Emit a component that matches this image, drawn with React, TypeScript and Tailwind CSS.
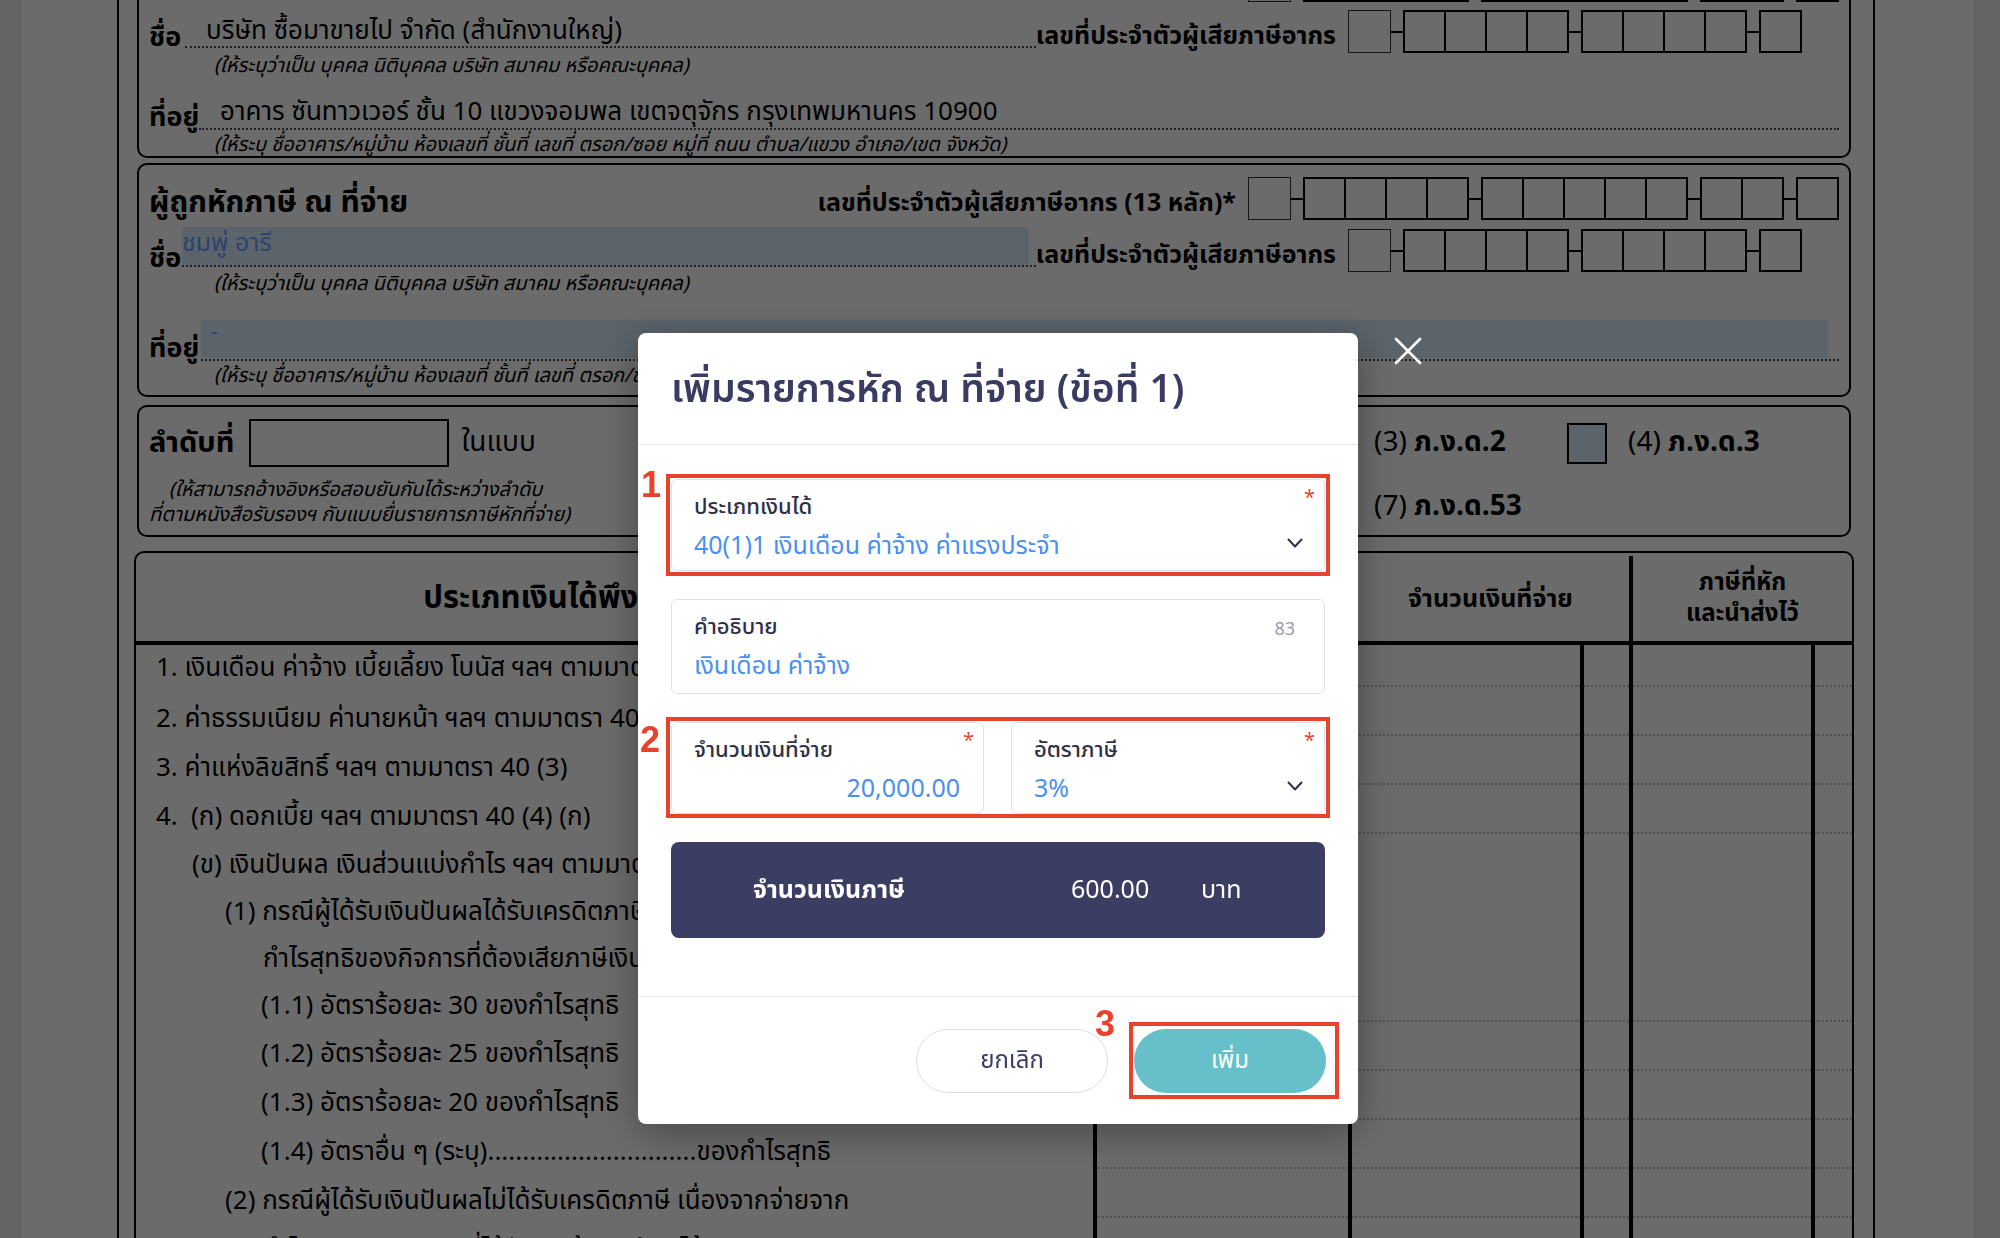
import React from 'react'

const TH =
	"font-['Noto_Sans_Thai','Noto_Sans_Thai_UI','Noto_Sans','Liberation_Sans',sans-serif]"

function DigitBoxes({
	groups,
	className = '',
}: {
	groups: number[]
	className?: string
}) {
	return (
		<div className={`flex items-center shrink-0 ${className}`}>
			{groups.map((n, gi) => (
				<div key={gi} className="flex items-center">
					{gi > 0 && <div className="w-[12px] h-[2px] bg-black" />}
					{gi === 0 ? (
						<div className="w-[43px] h-[43px] border border-black/80" />
					) : (
						<div className="flex border-2 border-black">
							{Array.from({ length: n }).map((_, i) => (
								<div
									key={i}
									className={`h-[39px] shrink-0 ${i > 0 ? 'w-[41px] border-l-2 border-black' : 'w-[39px]'}`}
								/>
							))}
						</div>
					)}
				</div>
			))}
		</div>
	)
}

function Hint({ children, className = '' }: { children: React.ReactNode; className?: string }) {
	return <div className={`text-[20px] italic leading-[24px] text-black whitespace-nowrap ${className}`}>{children}</div>
}

function TopBox() {
	return (
		<div className="mx-[3px] -mt-[58px] h-[216px] shrink-0 rounded-[10px] border-2 border-black px-[10px] pt-[15px] flex flex-col">
			<div className="h-[44px] flex items-end justify-between">
				<span className="text-[30px] font-bold leading-[30px] -translate-y-[8px]">
					ผู้มีหน้าที่หักภาษี ณ ที่จ่าย
				</span>
				<div className="flex items-end">
					<span className="text-[24px] font-bold leading-[30px] mr-[13px] -translate-y-[8px]">
						เลขประจำตัวผู้เสียภาษีอากร (13 หลัก)*
					</span>
					<DigitBoxes groups={[1, 4, 5, 2, 1]} />
				</div>
			</div>
			<div className="mt-[8px] h-[44px] flex items-end">
				<span className="w-[36px] shrink-0 whitespace-nowrap text-[27px] font-bold leading-[30px]">ชื่อ</span>
				<div className="flex-1 h-[38px] border-b-2 border-dotted border-black/70 flex items-end pl-[21px] mb-[5px]">
					<span className="text-[26px] leading-[30px] whitespace-nowrap">บริษัท ซื้อมาขายไป จำกัด (สำนักงานใหญ่)</span>
				</div>
				<span className="text-[25px] font-bold leading-[30px] mb-[2px] whitespace-nowrap">เลขที่ประจำตัวผู้เสียภาษีอากร</span>
				<DigitBoxes className="ml-[12px] mr-[37px]" groups={[1, 4, 4, 1]} />
			</div>
			<Hint className="pl-[65px] mt-[1px]">(ให้ระบุว่าเป็น บุคคล นิติบุคคล บริษัท สมาคม หรือคณะบุคคล)</Hint>
			<div className="mt-[20px] h-[32px] flex items-end">
				<span className="w-[50px] shrink-0 whitespace-nowrap text-[27px] font-bold leading-[30px] translate-y-[3px]">ที่อยู่</span>
				<div className="flex-1 h-[32px] border-b-2 border-dotted border-black/70 flex items-end pl-[21px]">
					<span className="text-[26px] leading-[32px] whitespace-nowrap">
						อาคาร ซันทาวเวอร์ ชั้น 10 แขวงจอมพล เขตจตุจักร กรุงเทพมหานคร 10900
					</span>
				</div>
			</div>
			<Hint className="pl-[65px] mt-[3px]">
				(ให้ระบุ ชื่ออาคาร/หมู่บ้าน ห้องเลขที่ ชั้นที่ เลขที่ ตรอก/ซอย หมู่ที่ ถนน ตำบล/แขวง อำเภอ/เขต จังหวัด)
			</Hint>
		</div>
	)
}

function PayeeBox() {
	return (
		<div className="mx-[3px] mt-[5px] h-[234px] shrink-0 rounded-[10px] border-2 border-black px-[10px] pt-[12px] flex flex-col">
			<div className="h-[43px] flex items-center justify-between">
				<span className="text-[30px] font-bold leading-[36px] translate-y-[4px] whitespace-nowrap">ผู้ถูกหักภาษี ณ ที่จ่าย</span>
				<div className="flex items-center">
					<span className="text-[25px] font-bold leading-[30px] mr-[12px] translate-y-[4px] whitespace-nowrap">
						เลขที่ประจำตัวผู้เสียภาษีอากร (13 หลัก)*
					</span>
					<DigitBoxes groups={[1, 4, 5, 2, 1]} />
				</div>
			</div>
			<div className="mt-[6px] h-[46px] flex items-end">
				<span className="w-[33px] shrink-0 whitespace-nowrap text-[27px] font-bold leading-[30px] translate-y-[2px]">ชื่อ</span>
				<div className="flex-1 h-[40px] border-b-2 border-dotted border-black/70 mb-[5px] pr-[4px]">
					<div className="h-[38px] w-[847px] bg-[#d9eeff] text-[25px] leading-[32px] text-[#6f9eff]">
						ชมพู่ อารี
					</div>
				</div>
				<span className="text-[25px] font-bold leading-[30px] mb-[2px] whitespace-nowrap">เลขที่ประจำตัวผู้เสียภาษีอากร</span>
				<DigitBoxes className="ml-[12px] mr-[37px]" groups={[1, 4, 4, 1]} />
			</div>
			<Hint className="pl-[65px]">(ให้ระบุว่าเป็น บุคคล นิติบุคคล บริษัท สมาคม หรือคณะบุคคล)</Hint>
			<div className="mt-[24px] h-[41px] flex items-end">
				<span className="w-[52px] shrink-0 whitespace-nowrap text-[27px] font-bold leading-[30px] translate-y-[3px]">ที่อยู่</span>
				<div className="flex-1 h-[41px] border-b-2 border-dotted border-black/70 pr-[11px]">
					<div className="h-[38px] bg-[#d9eeff] pl-[10px] text-[22px] leading-[26px] text-[#6f9eff]">-</div>
				</div>
			</div>
			<Hint className="pl-[65px] mt-[3px]">
				(ให้ระบุ ชื่ออาคาร/หมู่บ้าน ห้องเลขที่ ชั้นที่ เลขที่ ตรอก/ซอย หมู่ที่ ถนน ตำบล/แขวง อำเภอ/เขต จังหวัด)
			</Hint>
		</div>
	)
}

function Check({ filled = false }: { filled?: boolean }) {
	return <div className={`w-[40px] h-[41px] border-2 border-black ${filled ? 'bg-[#d9eeff]' : ''}`} />
}

function FormTypeBox() {
	return (
		<div className="mx-[3px] mt-[8px] h-[132px] shrink-0 rounded-[10px] border-2 border-black px-[10px] pt-[12px] flex">
			<div className="flex flex-col">
				<div className="flex items-center h-[48px]">
					<span className="text-[29px] font-bold leading-[34px] whitespace-nowrap">ลำดับที่</span>
					<div className="ml-[15px] w-[200px] h-[48px] border-2 border-black" />
					<span className="ml-[12px] text-[28px] leading-[30px]">ในแบบ</span>
				</div>
				<Hint className="pl-[20px] mt-[11px] leading-[25px]">(ให้สามารถอ้างอิงหรือสอบยันกันได้ระหว่างลำดับ</Hint>
				<Hint className="leading-[25px]">ที่ตามหนังสือรับรองฯ กับแบบยื่นรายการภาษีหักที่จ่าย)</Hint>
			</div>
			<div className="ml-auto w-[465px] flex flex-col">
				<div className="flex items-center h-[48px]">
					<span className="w-[193px] text-[28px] leading-[30px]">
						(3) <b>ภ.ง.ด.2</b>
					</span>
					<Check filled />
					<span className="ml-[21px] text-[28px] leading-[30px]">
						(4) <b>ภ.ง.ด.3</b>
					</span>
				</div>
				<div className="mt-[24px] h-[32px] flex items-center">
					<span className="text-[28px] leading-[30px]">
						(7) <b>ภ.ง.ด.53</b>
					</span>
				</div>
			</div>
		</div>
	)
}

const incomeLines: { text: string; lead?: string; pl: string; h: string }[] = [
	{ text: '1. เงินเดือน ค่าจ้าง เบี้ยเลี้ยง โบนัส ฯลฯ ตามมาตรา 40 (1)', pl: 'pl-[20px] pt-[4px]', h: 'h-[42px]' },
	{ text: '2. ค่าธรรมเนียม ค่านายหน้า ฯลฯ ตามมาตรา 40 (2)', pl: 'pl-[20px] pt-[14px]', h: 'h-[49px]' },
	{ text: '3. ค่าแห่งลิขสิทธิ์ ฯลฯ ตามมาตรา 40 (3)', pl: 'pl-[20px] pt-[14px]', h: 'h-[49px]' },
	{ lead: '4.', text: '(ก) ดอกเบี้ย ฯลฯ ตามมาตรา 40 (4) (ก)', pl: 'pl-[20px] pt-[14px]', h: 'h-[49px]' },
	{ text: '(ข) เงินปันผล เงินส่วนแบ่งกำไร ฯลฯ ตามมาตรา 40 (4) (ข)', pl: 'pl-[56px] pt-[14px]', h: 'h-[47px]' },
	{ text: '(1) กรณีผู้ได้รับเงินปันผลได้รับเครดิตภาษี โดยจ่ายจาก', pl: 'pl-[89px] pt-[14px]', h: 'h-[47px]' },
	{ text: 'กำไรสุทธิของกิจการที่ต้องเสียภาษีเงินได้นิติบุคคลในอัตราดังนี้', pl: 'pl-[127px] pt-[14px]', h: 'h-[47px]' },
	{ text: '(1.1) อัตราร้อยละ 30 ของกำไรสุทธิ', pl: 'pl-[125px] pt-[14px]', h: 'h-[47px]' },
	{ text: '(1.2) อัตราร้อยละ 25 ของกำไรสุทธิ', pl: 'pl-[125px] pt-[14px]', h: 'h-[49px]' },
	{ text: '(1.3) อัตราร้อยละ 20 ของกำไรสุทธิ', pl: 'pl-[125px] pt-[14px]', h: 'h-[49px]' },
	{
		text: '(1.4) อัตราอื่น ๆ (ระบุ)..............................ของกำไรสุทธิ',
		pl: 'pl-[125px] pt-[14px]',
		h: 'h-[49px]',
	},
	{ text: '(2) กรณีผู้ได้รับเงินปันผลไม่ได้รับเครดิตภาษี เนื่องจากจ่ายจาก', pl: 'pl-[89px] pt-[14px]', h: 'h-[49px]' },
	{ text: 'กำไรสุทธิของกิจการที่ได้รับยกเว้นภาษีเงินได้นิติบุคคล', pl: 'pl-[127px] pt-[14px]', h: 'h-[49px]' },
]

const cellHeights = [
	'h-[42px]',
	'h-[49px]',
	'h-[49px]',
	'h-[49px]',
	'h-[188px]',
	'h-[49px]',
	'h-[49px]',
	'h-[49px]',
	'h-[49px]',
	'h-[49px]',
	'h-[49px]',
]

function CellColumn({ className = '' }: { className?: string }) {
	return (
		<div className={`flex flex-col ${className}`}>
			{cellHeights.map((h, i) => (
				<div key={i} className={`${h} shrink-0 border-b-2 border-dotted border-black/25`} />
			))}
		</div>
	)
}

function IncomeTable() {
	return (
		<div className="mt-[14px] flex-1 rounded-t-[10px] border-2 border-b-0 border-black flex flex-col">
			<div className="h-[92px] shrink-0 flex border-b-4 border-black">
				<div className="w-[957px] flex items-center justify-center pt-[4px] text-[31px] font-bold leading-[34px]">
					ประเภทเงินได้พึงประเมินที่จ่าย
				</div>
				<div className="w-[255px] border-l-4 border-black flex flex-col items-center justify-center text-[24px] font-bold leading-[28px]">
					<span>วัน เดือน</span>
					<span>หรือปีภาษี ที่จ่าย</span>
				</div>
				<div className="w-[281px] border-l-4 border-black flex items-center justify-center pt-[4px] text-[25px] font-bold leading-[28px]">
					จำนวนเงินที่จ่าย
				</div>
				<div className="flex-1 mt-[3px] border-l-4 border-black flex flex-col items-center justify-center text-[24px] font-bold leading-[31px]">
					<span>ภาษีที่หัก</span>
					<span>และนำส่งไว้</span>
				</div>
			</div>
			<div className="flex flex-1">
				<div className="w-[957px] flex flex-col">
					{incomeLines.map((l, i) => (
						<div key={i} className={`${l.h} ${l.pl} shrink-0 flex items-center whitespace-nowrap text-[26px] leading-[30px]`}>
							{l.lead && <span className="w-[35px]">{l.lead}</span>}
							<span>{l.text}</span>
						</div>
					))}
				</div>
				<CellColumn className="w-[255px] border-l-4 border-black" />
				<CellColumn className="w-[232px] border-l-4 border-black" />
				<CellColumn className="w-[49px] border-l-4 border-black" />
				<CellColumn className="w-[182px] border-l-4 border-black" />
				<CellColumn className="flex-1 border-l-4 border-black" />
			</div>
		</div>
	)
}

function Chevron() {
	return (
		<svg width="16" height="10" viewBox="0 0 16 10" fill="none">
			<polyline points="1.5,1.5 8,8.5 14.5,1.5" stroke="#2e3048" strokeWidth="2" strokeLinecap="round" strokeLinejoin="round" />
		</svg>
	)
}

function Field({
	label,
	value,
	required = false,
	counter,
	select = false,
	alignRight = false,
	className = '',
}: {
	label: string
	value: string
	required?: boolean
	counter?: string
	select?: boolean
	alignRight?: boolean
	className?: string
}) {
	return (
		<div className={`relative rounded-[6px] border border-[#dfe1ea] bg-white pl-[22px] pr-[23px] pt-[13px] ${className}`}>
			<div className="text-[22px] leading-[30px] font-medium text-[#2e3048]">{label}</div>
			{required && (
				<span className="absolute right-[9px] top-[8px] text-[20px] leading-none text-[#e8472f]">*</span>
			)}
			{counter && (
				<span className="absolute right-[29px] top-[17px] text-[18px] leading-[26px] text-[#9a9cab]">{counter}</span>
			)}
			<div className={`mt-[7px] text-[25px] leading-[32px] text-[#4a90f0] ${alignRight ? 'text-right' : ''}`}>
				{value}
			</div>
			{select && (
				<span className="absolute right-[21px] top-[58px]">
					<Chevron />
				</span>
			)}
		</div>
	)
}

function Mark({ n, className }: { n: string; className: string }) {
	return (
		<span
			className={`absolute font-['Liberation_Sans',sans-serif] text-[36px] font-bold leading-none text-[#e8412c] ${className}`}
		>
			{n}
		</span>
	)
}

function AddWithholdingModal() {
	return (
		<>
			<svg className="fixed left-[1394px] top-[337px]" width="28" height="28" viewBox="0 0 28 28">
				<path d="M2 2 L26 26 M26 2 L2 26" stroke="white" strokeWidth="2.6" strokeLinecap="round" />
			</svg>
			<div className="fixed left-[638px] top-[333px] w-[720px] rounded-[8px] bg-white shadow-[0_8px_40px_rgba(0,0,0,0.35)]">
				<div className="h-[112px] px-[33px] flex items-center border-b border-[#e3e3ec]">
					<h2 className="text-[39px] font-semibold leading-[44px] text-[#393b63] translate-y-[2px]">
						เพิ่มรายการหัก ณ ที่จ่าย (ข้อที่ 1)
					</h2>
				</div>
				<div className="px-[33px] pt-[34px] pb-[58px] flex flex-col gap-[28px]">
					<div className="relative">
						<Field
							className="h-[92px]"
							label="ประเภทเงินได้"
							value="40(1)1 เงินเดือน ค่าจ้าง ค่าแรงประจำ"
							required
							select
						/>
						<div className="absolute -inset-[5px] border-4 border-[#e8412c]" />
						<Mark n="1" className="-left-[30px] -top-[12px]" />
					</div>
					<Field className="h-[95px]" label="คำอธิบาย" value="เงินเดือน ค่าจ้าง" counter="83" />
					<div className="relative flex gap-[27px]">
						<Field className="h-[92px] w-[313px]" label="จำนวนเงินที่จ่าย" value="20,000.00" required alignRight />
						<Field className="h-[92px] flex-1" label="อัตราภาษี" value="3%" required select />
						<div className="absolute -inset-x-[5px] -top-[5px] -bottom-[4px] border-4 border-[#e8412c]" />
						<Mark n="2" className="-left-[31px] top-[0px]" />
					</div>
					<div className="h-[96px] rounded-[8px] bg-[#3c3d63] flex items-center pl-[82px] text-[25px] leading-[30px] text-white">
						<span className="w-[318px] font-bold">จำนวนเงินภาษี</span>
						<span className="w-[130px]">600.00</span>
						<span>บาท</span>
					</div>
				</div>
				<div className="h-[128px] border-t border-[#e3e3ec] flex items-center justify-end gap-[26px] pr-[32px]">
					<button className="h-[64px] w-[192px] rounded-full border border-[#dcdce6] bg-white text-[24px] text-[#3b3d64]">
						ยกเลิก
					</button>
					<div className="relative">
						<button className="h-[64px] w-[192px] rounded-full bg-[#67c0c9] text-[24px] text-white">เพิ่ม</button>
						<div className="absolute -left-[5px] -right-[13px] -top-[7px] -bottom-[6px] border-4 border-[#e8412c]" />
						<Mark n="3" className="-left-[39px] -top-[23px]" />
					</div>
				</div>
			</div>
		</>
	)
}

export default function App() {
	return (
		<div className={`relative h-screen w-screen overflow-hidden bg-[#eeeeee] text-black ${TH}`}>
			<div className="ml-[22px] w-[1952px] h-full bg-white">
				<div className="ml-[95px] w-[1758px] h-full border-x-2 border-black pl-[15px] pr-[19px] flex flex-col">
					<TopBox />
					<PayeeBox />
					<FormTypeBox />
					<IncomeTable />
				</div>
			</div>
			<div className="fixed inset-0 bg-black/[0.58]" />
			<AddWithholdingModal />
		</div>
	)
}
